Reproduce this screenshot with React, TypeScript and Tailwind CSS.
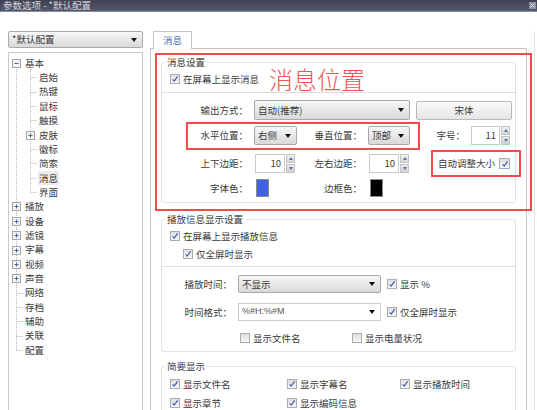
import React from 'react'

const Caret = () => (
  <svg width="6" height="4" viewBox="0 0 6 4" className="shrink-0">
    <polygon points="0,0 6,0 3,4" fill="#111" />
  </svg>
)

const Check = ({ checked = true, label }: { checked?: boolean; label: string }) => (
  <div className="flex items-center gap-[3px] h-[14px]">
    <span className="w-[10px] h-[10px] border border-[#adadad] bg-gradient-to-b from-[#dedede] to-[#f7f7f7] flex items-center justify-center shrink-0">
      {checked && (
        <svg width="8" height="8" viewBox="0 0 8 8">
          <path d="M1.6 4.3 L3.2 6.1 L6.6 1.4" stroke="#3d55b3" strokeWidth="1.1" fill="none" />
        </svg>
      )}
    </span>
    <span className="whitespace-nowrap">{label}</span>
  </div>
)

const Select = ({ text, className = '' }: { text: string; className?: string }) => (
  <div
    className={
      'flex items-center justify-between border border-[#a9a9a9] rounded-[2px] bg-gradient-to-b from-[#f7f7f7] to-[#d9d9d9] pl-[3px] pr-[5px] ' +
      className
    }
  >
    <span className="whitespace-nowrap">{text}</span>
    <Caret />
  </div>
)

const Spin = ({ value, className = '' }: { value: string; className?: string }) => (
  <div className={'flex h-[19px] ' + className}>
    <div className="flex-1 border border-[#cacaca] bg-white text-right pr-[3px] leading-[17px]">{value}</div>
    <div className="w-[9px] ml-px flex flex-col gap-px">
      <div className="flex-1 bg-gradient-to-b from-[#f2f2f2] to-[#d6d6d6] border border-[#c4c4c4] flex items-center justify-center">
        <svg width="4" height="3" viewBox="0 0 4 3">
          <polygon points="0,3 4,3 2,0" fill="#5a72b8" />
        </svg>
      </div>
      <div className="flex-1 bg-gradient-to-b from-[#e8e8e8] to-[#cfcfcf] border border-[#c4c4c4] flex items-center justify-center">
        <svg width="4" height="3" viewBox="0 0 4 3">
          <polygon points="0,0 4,0 2,3" fill="#5a72b8" />
        </svg>
      </div>
    </div>
  </div>
)

const Label = ({ text, className = '' }: { text: string; className?: string }) => (
  <span className={'text-right whitespace-nowrap shrink-0 ' + className}>{text}</span>
)

const tree: { t: string; lvl: number; box?: '+' | '-' }[] = [
  { t: '基本', lvl: 0, box: '-' },
  { t: '启始', lvl: 1 },
  { t: '热键', lvl: 1 },
  { t: '鼠标', lvl: 1 },
  { t: '触摸', lvl: 1 },
  { t: '皮肤', lvl: 1, box: '+' },
  { t: '徽标', lvl: 1 },
  { t: '简索', lvl: 1 },
  { t: '消息', lvl: 1 },
  { t: '界面', lvl: 1 },
  { t: '播放', lvl: 0, box: '+' },
  { t: '设备', lvl: 0, box: '+' },
  { t: '滤镜', lvl: 0, box: '+' },
  { t: '字幕', lvl: 0, box: '+' },
  { t: '视频', lvl: 0, box: '+' },
  { t: '声音', lvl: 0, box: '+' },
  { t: '网络', lvl: 0 },
  { t: '存档', lvl: 0 },
  { t: '辅助', lvl: 0 },
  { t: '关联', lvl: 0 },
  { t: '配置', lvl: 0 },
]

const PITCH = 14.35
const TOP = 2.8

const TreeLines = () => {
  const cy = (i: number) => TOP + i * PITCH + PITCH / 2
  const box = (x: number, y: number, kind: '+' | '-', key: string) => (
    <g key={key}>
      <rect x={x - 4} y={y - 4} width="8" height="8" fill="#f4f4f4" stroke="#a8a8a8" strokeWidth="1" />
      <line x1={x - 2} y1={y} x2={x + 2} y2={y} stroke="#4a64a8" strokeWidth="1" />
      {kind === '+' && <line x1={x} y1={y - 2} x2={x} y2={y + 2} stroke="#4a64a8" strokeWidth="1" />}
    </g>
  )
  return (
    <svg className="absolute left-0 top-0 pointer-events-none" width="40" height="360">
      <line x1="7.5" y1={cy(0)} x2="7.5" y2={cy(20)} stroke="#b4b4b4" strokeDasharray="1 1" />
      <line x1="21.5" y1={cy(0) + 4} x2="21.5" y2={cy(9)} stroke="#b4b4b4" strokeDasharray="1 1" />
      {tree.map((it, i) => {
        const y = Math.round(cy(i)) + 0.5
        if (it.lvl === 0) {
          return it.box ? (
            box(7.5, y, it.box, 'b' + i)
          ) : (
            <line key={'l' + i} x1="7.5" y1={y} x2="14" y2={y} stroke="#b4b4b4" strokeDasharray="1 1" />
          )
        }
        return it.box ? (
          box(21.5, y, it.box, 'b' + i)
        ) : (
          <line key={'l' + i} x1="21.5" y1={y} x2="28" y2={y} stroke="#b4b4b4" strokeDasharray="1 1" />
        )
      })}
    </svg>
  )
}

export default function App() {
  return (
    <div className="relative w-[537px] h-[410px] overflow-hidden bg-white text-[9.5px] text-[#3a3a3a] font-['Noto_Sans_CJK_SC','Noto_Sans',sans-serif]">
      {/* title bar */}
      <div className="h-[12px] bg-gradient-to-b from-[#3f4154] to-[#55586c] border-b border-[#8a8c9a] flex items-start justify-between">
        <span className="ml-[3px] text-[9.5px] leading-[11px] text-[#d4d5de]">参数选项 - *默认配置</span>
        <svg width="7" height="7" viewBox="0 0 7 7" className="mt-[2px] mr-[1px]">
          <rect x="0" y="0" width="7" height="7" fill="#8d8f9c" />
          <path d="M1.5 1.5 L5.5 5.5 M5.5 1.5 L1.5 5.5" stroke="#e2e3ea" strokeWidth="1" />
        </svg>
      </div>

      <div className="flex h-[398px] pt-[19px] pl-[8px]">
        {/* left column */}
        <div className="w-[135px] flex flex-col">
          <Select text="*默认配置" className="h-[17px] pr-[4px]" />
          <div className="relative mt-[4px] flex-1 border border-[#c9c9c9] border-b-0">
            <TreeLines />
            <div style={{ paddingTop: TOP }}>
              {tree.map((it) => (
                <div
                  key={it.t}
                  className={'h-[14.35px] leading-[14.35px] flex ' + (it.lvl === 0 ? 'pl-[15px]' : 'pl-[29px]')}
                >
                  <span className={'px-px ' + (it.t === '消息' ? 'bg-[#ececec]' : '')}>{it.t}</span>
                </div>
              ))}
            </div>
          </div>
        </div>

        {/* right column */}
        <div className="ml-[7px] w-[377px] flex flex-col">
          <div className="h-[17px] flex">
            <div className="ml-[3px] w-[39px] h-[18px] border border-b-0 border-[#c6c6c6] bg-white relative z-10 flex items-center justify-center text-[#4d6fb6]">
              消息
            </div>
          </div>
          <div className="flex-1 border border-b-0 border-[#c6c6c6] px-[10px] pt-[6.5px]">
            {/* group 1 */}
            <fieldset className="border border-[#e0e3e8] rounded-[3px] pb-[5px]">
              <legend className="ml-[3px] px-[2px] leading-[13px]">消息设置</legend>
              <div className="pl-[8px] mt-[3.5px]">
                <Check label="在屏幕上显示消息" />
              </div>
              <div className="mt-[6px] h-px bg-[#dcdcdc]" />
              <div className="mt-[7px] h-[20px] flex items-center">
                <Label text="输出方式：" className="w-[86px]" />
                <Select text="自动(推荐)" className="ml-[6px] w-[156px] h-[20px]" />
                <div className="ml-[6px] w-[96px] h-[19px] border border-[#b9b9b9] rounded-[2px] bg-gradient-to-b from-[#fafafa] to-[#e6e6e6] flex items-center justify-center">
                  宋体
                </div>
              </div>
              <div className="mt-[6px] h-[19px] flex items-center">
                <Label text="水平位置：" className="w-[86px]" />
                <Select text="右侧" className="ml-[6px] w-[43px] h-[19px]" />
                <Label text="垂直位置：" className="w-[65px]" />
                <Select text="顶部" className="ml-[6px] w-[42px] h-[19px]" />
                <Label text="字号：" className="w-[55px]" />
                <Spin value="11" className="ml-[6px] w-[39px]" />
              </div>
              <div className="mt-[9px] h-[19px] flex items-center">
                <Label text="上下边距：" className="w-[86px]" />
                <Spin value="10" className="ml-[7px] w-[40px]" />
                <Label text="左右边距：" className="w-[67px]" />
                <Spin value="10" className="ml-[7px] w-[40px]" />
                <span className="ml-[29px] whitespace-nowrap">自动调整大小</span>
                <span className="ml-[4px] w-[11px] h-[11px] border border-[#adadad] bg-gradient-to-b from-[#dedede] to-[#f7f7f7] flex items-center justify-center">
                  <svg width="8" height="8" viewBox="0 0 8 8">
                    <path d="M1.6 4.3 L3.2 6.1 L6.6 1.4" stroke="#3d55b3" strokeWidth="1.1" fill="none" />
                  </svg>
                </span>
              </div>
              <div className="mt-[6px] h-[18px] flex items-center">
                <Label text="字体色：" className="w-[86px]" />
                <span className="ml-[8px] w-[13px] h-[18px] border border-[#8a8a8a] bg-[#3f62e6]" />
                <Label text="边框色：" className="w-[93px]" />
                <span className="ml-[8px] w-[13px] h-[18px] border border-[#8a8a8a] bg-black" />
              </div>
            </fieldset>

            {/* group 2 */}
            <fieldset className="mt-[9.5px] border border-[#e0e3e8] rounded-[3px] pb-[6px]">
              <legend className="ml-[3px] px-[2px] leading-[13px]">播放信息显示设置</legend>
              <div className="pl-[8px] mt-[3.5px]">
                <Check label="在屏幕上显示播放信息" />
              </div>
              <div className="pl-[21px] mt-[4px]">
                <Check label="仅全屏时显示" />
              </div>
              <div className="mt-[5px] h-px bg-[#dcdcdc]" />
              <div className="mt-[8px] h-[18px] flex items-center">
                <Label text="播放时间：" className="w-[70px]" />
                <Select text="不显示" className="ml-[6px] w-[143px] h-[18px]" />
                <div className="ml-[6px]">
                  <Check label="显示 %" />
                </div>
              </div>
              <div className="mt-[10px] h-[18px] flex items-center">
                <Label text="时间格式：" className="w-[70px]" />
                <div className="ml-[6px] w-[143px] h-[18px] border border-[#cdcdcd] bg-white flex items-center justify-between pl-[3px] pr-[5px]">
                  <span className="font-['Liberation_Sans',sans-serif] text-[9px] text-[#555]">%#H:%#M</span>
                  <Caret />
                </div>
                <div className="ml-[6px]">
                  <Check label="仅全屏时显示" />
                </div>
              </div>
              <div className="mt-[10px] flex pl-[78px]">
                <div className="w-[112px]">
                  <Check checked={false} label="显示文件名" />
                </div>
                <Check checked={false} label="显示电量状况" />
              </div>
            </fieldset>

            {/* group 3 */}
            <fieldset className="mt-[7.5px] border border-[#e0e3e8] rounded-[3px] pb-[6px]">
              <legend className="ml-[3px] px-[2px] leading-[13px]">简要显示</legend>
              <div className="mt-[4.5px] flex pl-[8px]">
                <div className="w-[117px]">
                  <Check label="显示文件名" />
                </div>
                <div className="w-[113px]">
                  <Check label="显示字幕名" />
                </div>
                <Check label="显示播放时间" />
              </div>
              <div className="mt-[5px] flex pl-[8px]">
                <div className="w-[117px]">
                  <Check label="显示章节" />
                </div>
                <Check label="显示编码信息" />
              </div>
            </fieldset>
          </div>
        </div>
        <div className="ml-[7px] w-px bg-[#e2e2e2]" />
      </div>

      {/* annotations */}
      <div className="absolute left-[155px] top-[53px] w-[377px] h-[158px] border-2 border-[#f04a4a]" />
      <div className="absolute left-[186px] top-[122px] w-[234px] h-[28px] border-2 border-[#f04a4a]" />
      <div className="absolute left-[431px] top-[150px] w-[90px] h-[27px] border-2 border-[#f04a4a]" />
      <div className="absolute left-[269px] top-[62px] text-[24px] leading-[34px] font-light text-[#f05555] tracking-[0px]">
        消息位置
      </div>
    </div>
  )
}
